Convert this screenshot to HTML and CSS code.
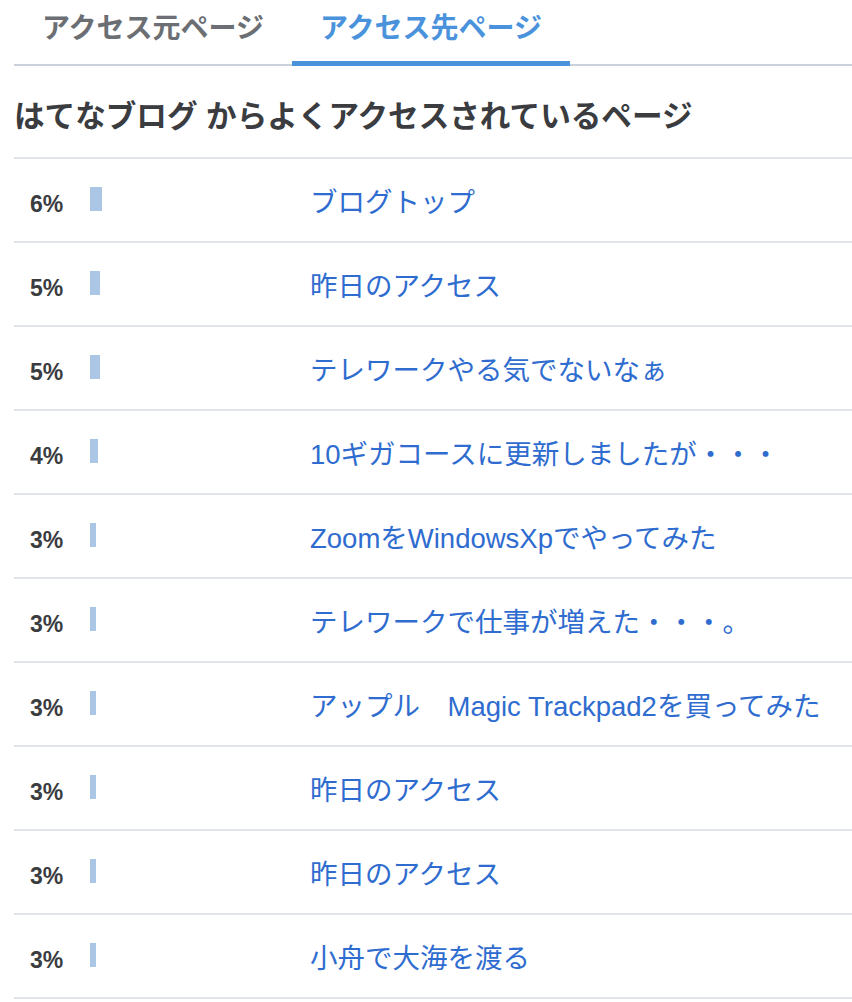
FILE: index.html
```html
<!DOCTYPE html>
<html lang="ja">
<head>
	<meta charset="utf-8">
	<title>アクセス先ページ</title>
	<link rel="stylesheet" href="styles.css">
</head>
<body>
<div class="panel">
	<ul class="tabs">
		<li class="tab">アクセス元ページ</li>
		<li class="tab tab-active">アクセス先ページ</li>
	</ul>
	<h2 class="title">はてなブログ からよくアクセスされているページ</h2>
	<ul class="ranking">
		<li class="row"><span class="pct">6%</span><span class="bar-cell"><span class="bar" style="width: 12px"></span></span><a class="page" href="#">ブログトップ</a></li>
		<li class="row"><span class="pct">5%</span><span class="bar-cell"><span class="bar" style="width: 10px"></span></span><a class="page" href="#">昨日のアクセス</a></li>
		<li class="row"><span class="pct">5%</span><span class="bar-cell"><span class="bar" style="width: 10px"></span></span><a class="page" href="#">テレワークやる気でないなぁ</a></li>
		<li class="row"><span class="pct">4%</span><span class="bar-cell"><span class="bar" style="width: 8px"></span></span><a class="page" href="#">10ギガコースに更新しましたが・・・</a></li>
		<li class="row"><span class="pct">3%</span><span class="bar-cell"><span class="bar" style="width: 6px"></span></span><a class="page" href="#">ZoomをWindowsXpでやってみた</a></li>
		<li class="row"><span class="pct">3%</span><span class="bar-cell"><span class="bar" style="width: 6px"></span></span><a class="page" href="#">テレワークで仕事が増えた・・・。</a></li>
		<li class="row"><span class="pct">3%</span><span class="bar-cell"><span class="bar" style="width: 6px"></span></span><a class="page" href="#">アップル　Magic Trackpad2を買ってみた</a></li>
		<li class="row"><span class="pct">3%</span><span class="bar-cell"><span class="bar" style="width: 6px"></span></span><a class="page" href="#">昨日のアクセス</a></li>
		<li class="row"><span class="pct">3%</span><span class="bar-cell"><span class="bar" style="width: 6px"></span></span><a class="page" href="#">昨日のアクセス</a></li>
		<li class="row"><span class="pct">3%</span><span class="bar-cell"><span class="bar" style="width: 6px"></span></span><a class="page" href="#">小舟で大海を渡る</a></li>
	</ul>
</div>
</body>
</html>
```

FILE: styles.css
```css
body {
	margin: 0;
	font-family: "Liberation Sans", "Noto Sans CJK JP", sans-serif;
	background: #fff;
	color: #3a3c3f;
}

.panel {
	padding-left: 14px;
}

.tabs {
	display: flex;
	margin: 0;
	padding: 0;
	list-style: none;
	border-bottom: 2px solid #c9d1da;
}

.tab {
	width: 278px;
	height: 61px;
	margin-bottom: -2px;
	text-align: center;
	font-size: 28px;
	font-weight: bold;
	line-height: 58px;
	color: #6b6f73;
	border-bottom: 5px solid transparent;
}

.tab-active {
	color: #4a93dc;
	border-bottom-color: #4a93dc;
}

.title {
	margin: 0;
	height: 91px;
	line-height: 100px;
	font-size: 30.6px;
	font-weight: bold;
	color: #3a3c3f;
	border-bottom: 2px solid #e1e5e9;
}

.ranking {
	margin: 0;
	padding: 0;
	list-style: none;
}

.row {
	display: grid;
	grid-template-columns: 60px 220px 1fr;
	align-items: center;
	height: 82px;
	padding-left: 16px;
	border-bottom: 2px solid #e1e5e9;
}

.pct {
	font-size: 23px;
	font-weight: bold;
	color: #3a3c3f;
	padding-top: 9px;
}

.bar-cell {
	display: flex;
	align-items: center;
	height: 24px;
	margin-top: -2px;
}

.bar {
	display: block;
	height: 24px;
	background: #abc7e5;
}

.page {
	font-size: 27.5px;
	color: #2f6ccf;
	text-decoration: none;
	white-space: nowrap;
}
```
